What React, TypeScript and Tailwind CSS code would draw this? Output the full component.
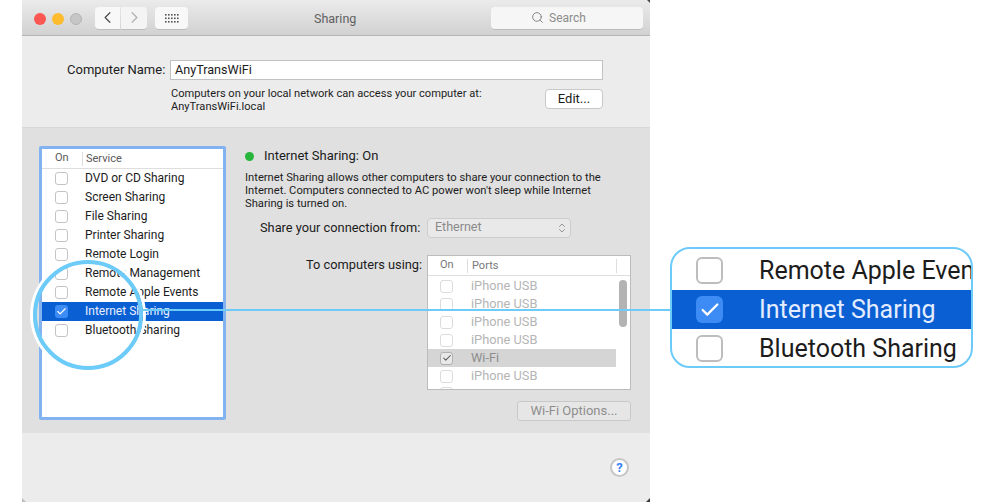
import { Check, ChevronLeft, ChevronRight, ChevronsUpDown, Search } from 'lucide-react';

const services = [
  'DVD or CD Sharing',
  'Screen Sharing',
  'File Sharing',
  'Printer Sharing',
  'Remote Login',
  'Remote Management',
  'Remote Apple Events',
  'Internet Sharing',
  'Bluetooth Sharing',
];

const ports = ['iPhone USB', 'iPhone USB', 'iPhone USB', 'iPhone USB', 'Wi-Fi', 'iPhone USB'];

function Light({ className }: { className: string }) {
  return <span className={`w-3 h-3 rounded-full ${className}`} />;
}

function GridIcon() {
  return (
    <svg width="14" height="10" viewBox="0 0 14 10" fill="#555555">
      {[0, 1, 2].map((row) =>
        [0, 1, 2, 3, 4].map((col) => (
          <rect key={`${row}-${col}`} x={col * 3} y={row * 3.5 + 1} width="1.6" height="1.6" />
        ))
      )}
    </svg>
  );
}

function CornerMark({ className, points, fill }: { className: string; points: string; fill: string }) {
  return (
    <svg className={`absolute ${className}`} width="4" height="4" viewBox="0 0 4 4">
      <polygon points={points} fill={fill} />
    </svg>
  );
}

function ServiceRow({ name }: { name: string }) {
  const selected = name === 'Internet Sharing';
  return (
    <div className={`flex items-center h-[19px] pl-[13px] ${selected ? 'bg-[#0a5fd3] text-[#e8f0ff]' : 'text-[#1c1c1c]'}`}>
      {selected ? (
        <span className="w-[13px] h-[13px] rounded-[3px] bg-[#3d8cf5] flex items-center justify-center">
          <Check size={11} strokeWidth={2.5} className="text-white" />
        </span>
      ) : (
        <span className="w-[13px] h-[13px] rounded-[3px] bg-white border border-[#c4c4c4]" />
      )}
      <span className="ml-[17px] -mt-[2px] text-[12px] whitespace-nowrap">{name}</span>
    </div>
  );
}

function PortRow({ name }: { name: string }) {
  const active = name === 'Wi-Fi';
  return (
    <div className={`flex items-center h-[18px] pl-[12px] ${active ? 'bg-[#d5d5d5] text-[#8e8e8e]' : 'text-[#b5b5b5]'}`}>
      <span className={`w-[13px] h-[13px] rounded-[3px] flex items-center justify-center border ${active ? 'bg-[#e8e8e8] border-[#b0b0b0]' : 'bg-white border-[#dcdcdc]'}`}>
        {active && <Check size={10} strokeWidth={2.5} className="text-[#555555]" />}
      </span>
      <span className="ml-[18px] text-[12.8px] whitespace-nowrap">{name}</span>
    </div>
  );
}

function ZoomRow({ name, selected }: { name: string; selected?: boolean }) {
  return (
    <div className={`flex items-center h-[39px] pl-[24px] shrink-0 ${selected ? 'bg-[#0a5fd3] text-[#e4edff]' : 'text-[#1c1c1c]'}`}>
      {selected ? (
        <span className="w-[27px] h-[27px] rounded-[6px] bg-[#3d8cf5] flex items-center justify-center shrink-0">
          <Check size={22} strokeWidth={2.5} className="text-white" />
        </span>
      ) : (
        <span className="w-[27px] h-[27px] rounded-[6px] bg-white border-2 border-[#bdbdbd] shrink-0" />
      )}
      <span className="ml-[36px] text-[25px] whitespace-nowrap">{name}</span>
    </div>
  );
}

export default function App() {
  return (
    <div className="relative w-[988px] h-[504px] bg-white overflow-hidden [font-family:Roboto,sans-serif]">
      <div className="relative ml-[22px] w-[628px] h-[502px] flex flex-col bg-[#ececec]">
        {/* title bar */}
        <div className="h-[36px] shrink-0 flex items-center pt-px bg-gradient-to-b from-[#ebebeb] to-[#d1d1d1] border-b border-[#b5b5b5]">
          <div className="flex items-center gap-[6px] ml-[12px] mt-px">
            <Light className="bg-[#fc5753]" />
            <Light className="bg-[#fdbc2e]" />
            <Light className="bg-[#c6c6c6] border border-[#b4b4b4]" />
          </div>
          <div className="flex ml-[13px] gap-px">
            <div className="w-[25px] h-[23px] rounded-l-[4px] bg-[#f8f8f8] border-b border-[#bcbcbc] flex items-center justify-center">
              <ChevronLeft size={19} strokeWidth={1.5} className="text-[#4a4a4a]" />
            </div>
            <div className="w-[26px] h-[23px] rounded-r-[4px] bg-[#f4f4f4] border-b border-[#bcbcbc] flex items-center justify-center">
              <ChevronRight size={19} strokeWidth={1.5} className="text-[#b0b0b0]" />
            </div>
          </div>
          <div className="w-[33px] h-[23px] ml-[8px] rounded-[4px] bg-[#f8f8f8] border-b border-[#bcbcbc] flex items-center justify-center">
            <GridIcon />
          </div>
          <div className="flex-1 pl-[126px] mt-[2px] text-[12.5px] text-[#5f5f5f]">Sharing</div>
          <div className="w-[152px] h-[23px] mr-[7px] rounded-[4px] pr-[17px] bg-[#f6f6f6] border-b border-[#bcbcbc] flex items-center justify-center gap-[5px] text-[12px] text-[#8c8c8c]">
            <Search size={13} strokeWidth={1.5} className="text-[#6e6e6e]" />
            Search
          </div>
        </div>

        {/* computer name */}
        <div className="h-[91px] shrink-0 pt-[24px] pl-[45px] pr-[47px]">
          <div className="flex items-center">
            <span className="w-[96px] text-[13px] text-[#1c1c1c] whitespace-nowrap">Computer Name:</span>
            <div className="ml-[7px] w-[433px] h-[20px] bg-white border border-[#c2c2c2] pl-[4px] flex items-center text-[12.6px] text-[#1c1c1c]">
              AnyTransWiFi
            </div>
          </div>
          <div className="flex justify-between ml-[104px] mt-[6px]">
            <div className="text-[11.1px] leading-[13px] text-[#1c1c1c] pt-px">
              <div>Computers on your local network can access your computer at:</div>
              <div>AnyTransWiFi.local</div>
            </div>
            <div className="w-[58px] h-[20px] mt-[3px] rounded-[4px] bg-white border border-[#c8c8c8] flex items-center justify-center text-[13px] text-[#1c1c1c]">
              Edit...
            </div>
          </div>
        </div>

        {/* service panel */}
        <div className="h-[306px] shrink-0 bg-[#e0e0e0] border-t border-[#d8d8d8] flex pt-[18px] pl-[17px]">
          <div className="w-[187px] h-[274px] shrink-0 bg-white border-[3px] border-[#82b2f0] rounded-[2px] flex flex-col">
            <div className="h-[20px] shrink-0 flex items-center border-b border-[#dedede] text-[11px] text-[#5a5a5a]">
              <span className="w-[40px] pl-[13px]">On</span>
              <span className="h-[14px] leading-[14px] border-l border-[#dedede] pl-[3px]">Service</span>
            </div>
            {services.map((name) => (
              <ServiceRow key={name} name={name} />
            ))}
          </div>

          <div className="ml-[19px] w-[390px] shrink-0">
            <div className="flex items-center h-[18px] mt-px">
              <span className="w-[9px] h-[9px] rounded-full bg-[#27b53b]" />
              <span className="ml-[10px] text-[13px] text-[#1c1c1c]">Internet Sharing: On</span>
            </div>
            <div className="mt-[6px] text-[11.2px] leading-[13px] text-[#1c1c1c] w-[370px]">
              Internet Sharing allows other computers to share your connection to the
              <br />
              Internet. Computers connected to AC power won't sleep while Internet
              <br />
              Sharing is turned on.
            </div>
            <div className="flex items-center mt-[8px]">
              <span className="w-[176px] pl-[15px] text-[12.8px] text-[#1c1c1c] whitespace-nowrap">Share your connection from:</span>
              <div className="ml-[6px] w-[144px] h-[20px] pb-px rounded-[4px] bg-[#e9e9e9] border border-[#cdcdcd] flex items-center justify-between pl-[7px] pr-[2px] text-[12.5px] text-[#8a8a8a]">
                Ethernet
                <ChevronsUpDown size={12} strokeWidth={1.5} className="text-[#777777]" />
              </div>
            </div>
            <div className="flex mt-[17px]">
              <span className="w-[176px] pl-[61px] text-[12.8px] text-[#1c1c1c] whitespace-nowrap">To computers using:</span>
              <div className="ml-[6px] w-[204px]">
                <div className="relative h-[135px] bg-white border border-[#bcbcbc] overflow-hidden">
                  <div className="h-[20px] flex items-center border-b border-[#dedede] text-[11px] text-[#777777]">
                    <span className="w-[39px] pl-[12px]">On</span>
                    <span className="h-[14px] leading-[14px] border-l border-[#dedede] pl-[4px] flex-1">Ports</span>
                    <span className="w-[14px] h-[14px] border-l border-[#dedede]" />
                  </div>
                  <div className="pt-px">
                    {ports.map((name, i) => (
                      <div key={i} className="mr-[14px]">
                        <PortRow name={name} />
                      </div>
                    ))}
                    <div className="ml-[12px] mt-[2px] w-[13px] h-[13px] rounded-[3px] border border-[#dcdcdc]" />
                  </div>
                  <div className="absolute right-[3px] top-[24px] w-[8px] h-[47px] rounded-full bg-[#b3b3b3]" />
                </div>
                <div className="flex justify-end mt-[11px]">
                  <div className="w-[114px] h-[20px] rounded-[3px] bg-[#e6e6e6] border border-[#c8c8c8] flex items-center justify-center text-[13px] text-[#8e8e8e]">
                    Wi-Fi Options...
                  </div>
                </div>
              </div>
            </div>
          </div>
        </div>

        {/* help */}
        <div className="flex-1 flex justify-end pt-[24px] pr-[21px]">
          <div className="w-[19px] h-[19px] mt-px rounded-full bg-white border-2 border-[#c6c6c6] flex items-center justify-center text-[13px] font-bold text-[#3b82f6]">
            ?
          </div>
        </div>

        {/* dark specks left on the window corners */}
        <CornerMark className="right-0 top-0" points="1,0 4,0 4,3" fill="#4a4a4a" />
        <CornerMark className="right-0 bottom-0" points="4,0 4,4 0,4" fill="#3a3a3a" />
        <CornerMark className="left-0 bottom-0" points="0,0 4,4 0,4" fill="#bdbdbd" />
      </div>

      {/* callout: ring, leader line and magnified rows */}
      <div className="absolute left-[33px] top-[260px] w-[110px] h-[110px] rounded-full border-[4px] border-[#6ccbf8] shadow-[0_0_0_3px_white]" />
      <div className="absolute left-[140px] top-[309px] w-[530px] h-[2px] bg-[#6ccbf8]" />
      <div className="absolute left-[670px] top-[247px] w-[303px] h-[121px] rounded-[20px] border-2 border-[#6ccbf8] bg-white overflow-hidden flex flex-col pt-[2px]">
        <ZoomRow name="Remote Apple Events" />
        <ZoomRow name="Internet Sharing" selected />
        <ZoomRow name="Bluetooth Sharing" />
      </div>
    </div>
  );
}
